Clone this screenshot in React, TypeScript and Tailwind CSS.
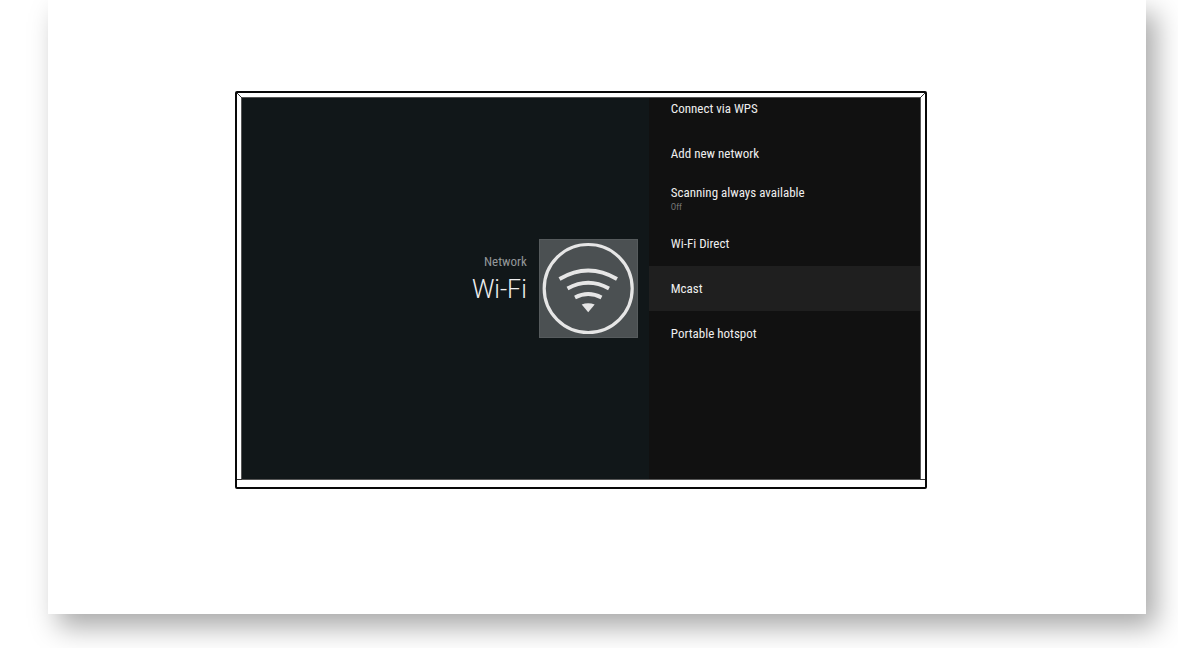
type Item = { label: string; detail?: string; selected?: boolean };

const items: Item[] = [
  { label: "Connect via WPS" },
  { label: "Add new network" },
  { label: "Scanning always available", detail: "Off" },
  { label: "Wi-Fi Direct" },
  { label: "Mcast", selected: true },
  { label: "Portable hotspot" },
];

function WifiIcon() {
  return (
    <svg viewBox="0 0 99 99" className="size-[99px] shrink-0 bg-[#4b5052]" fill="none" stroke="#e6e6e6" aria-hidden="true">
      <rect x="0.5" y="0.5" width="98" height="98" stroke="#565b5d" />
      <circle cx="49.2" cy="49.5" r="44" strokeWidth="3.2" />
      <path d="M20.5 40Q49.2 23 78 40" strokeWidth="3.8" />
      <path d="M28.5 49.5Q49.2 38 70 49.5" strokeWidth="3.8" />
      <path d="M36 58.5Q49.2 51.5 62.5 58.5" strokeWidth="3.8" />
      <path d="M42.7 65.5Q49.2 63.2 55.7 65.5L49.2 73.2Z" fill="#e6e6e6" stroke="none" />
    </svg>
  );
}

function SettingsRow({ label, detail, selected }: Item) {
  return (
    <li>
      <button
        type="button"
        className={`flex h-[45px] w-full flex-col items-start justify-center pl-[22px] text-left ${selected ? "bg-[#1f1f1f]" : ""}`}
      >
        <span className="text-[13px] leading-4 text-[#eeeeee]">{label}</span>
        {detail && <span className="text-[9px] leading-3 text-[#777777]">{detail}</span>}
      </button>
    </li>
  );
}

function Television() {
  return (
    <section className="relative rounded-xs border-2 border-[#090909] bg-white px-1 pt-1 pb-[7px]">
      <svg className="absolute top-0 left-0 size-[5px]" viewBox="0 0 5 5" stroke="#333" aria-hidden="true"><path d="M0 0L5 5" /></svg>
      <svg className="absolute top-0 right-0 size-[5px]" viewBox="0 0 5 5" stroke="#333" aria-hidden="true"><path d="M5 0L0 5" /></svg>
      <svg className="absolute bottom-[7px] left-0 h-px w-[5px]" viewBox="0 0 5 1" stroke="#333" aria-hidden="true"><path d="M0 .5H5" /></svg>
      <svg className="absolute right-0 bottom-[7px] h-px w-[5px]" viewBox="0 0 5 1" stroke="#333" aria-hidden="true"><path d="M0 .5H5" /></svg>
      <div className="flex h-[383px] overflow-hidden border border-[#555]">
        <div className="flex w-3/5 items-center justify-end gap-3 bg-[#111719] pr-[11px]">
          <div className="pb-[18px] text-right">
            <p className="text-[13px] leading-4 text-[#949799]">Network</p>
            <h1 className="pt-1 font-['Roboto',sans-serif] text-[25px] leading-8 font-light text-[#eeeeee]">Wi-Fi</h1>
          </div>
          <WifiIcon />
        </div>
        <div className="w-2/5 overflow-hidden bg-[#111111]">
          <ul className="-mt-3">
            {items.map((item) => (
              <SettingsRow key={item.label} {...item} />
            ))}
          </ul>
        </div>
      </div>
    </section>
  );
}

export default function App() {
  return (
    <div className="overflow-hidden bg-white pr-8 pb-[34px] pl-12 font-['Roboto_Condensed',Roboto,sans-serif]">
      <main className="bg-white pt-[91px] pr-[219px] pb-[125px] pl-[187px] shadow-[10px_13px_26px_rgba(0,0,0,0.34)]">
        <Television />
      </main>
    </div>
  );
}
